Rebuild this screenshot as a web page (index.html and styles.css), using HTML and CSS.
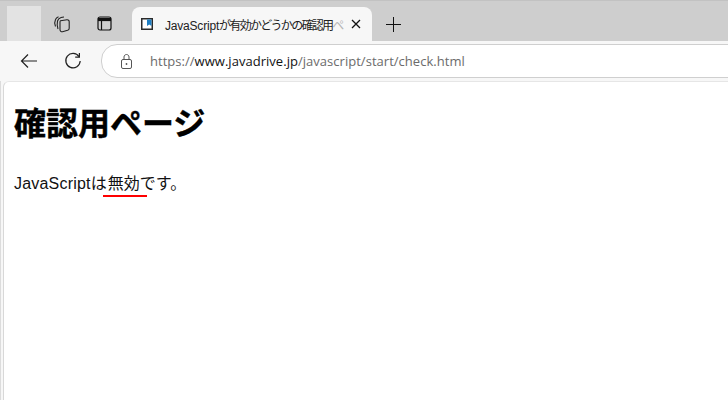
FILE: index.html
```html
<!DOCTYPE html>
<html lang="ja">
<head>
    <meta charset="UTF-8">
    <title>確認用ページ</title>
    <link rel="stylesheet" href="styles.css">
</head>
<body>
    <div class="tabbar">
        <div class="profile"></div>
        <div class="tool-btn">
            <svg width="18" height="18" viewBox="0 0 18 18" fill="none" stroke="#222" stroke-width="1.1">
                <path d="M2.5 11.5C1.5 9 1.5 6.5 2.5 4.5C3 3.2 4 2.2 5.5 1.7"/>
                <path d="M5 14C4.2 12 4 8.5 4.5 6C5 4.2 6 3.2 8 2.5C9 2.1 10 2 11 2"/>
                <path d="M7.5 5.8L14 4.8C15.2 4.7 16.2 5.5 16.2 6.7V13.2C16.2 14.3 15.6 15 14.6 15.3L9.5 16.7C8.2 17 7 16 7 14.8V7C7 6.4 7.1 6 7.5 5.8Z"/>
            </svg>
        </div>
        <div class="tool-btn">
            <svg width="15" height="15" viewBox="0 0 15 15" fill="none" stroke="#111" stroke-width="1.2">
                <rect x="1" y="1" width="13" height="13" rx="2"/>
                <path d="M1 3.5H14" stroke-width="3.2"/>
                <path d="M4.5 5V14"/>
            </svg>
        </div>
        <div class="tab">
            <svg class="favicon" width="12" height="12" viewBox="0 0 12 12">
                <rect x="0.75" y="0.75" width="10.5" height="10.5" fill="#fff" stroke="#2b2b2b" stroke-width="1.5"/>
                <path d="M6 1.5H10.5V8L8.2 6.6L6 8Z" fill="#1f7fc4"/>
            </svg>
            <span class="tab-title">JavaScript<span class="tab-title-ja">が有効かどうかの確認用<span class="tab-fade">ペ</span></span></span>
            <svg class="tab-close" width="10" height="10" viewBox="0 0 10 10" stroke="#111" stroke-width="1.3">
                <path d="M1 1L9 9M9 1L1 9"/>
            </svg>
        </div>
        <div class="new-tab">
            <svg width="15" height="15" viewBox="0 0 15 15" stroke="#111" stroke-width="1">
                <path d="M7.5 0V15M0 7.5H15"/>
            </svg>
        </div>
    </div>

    <div class="toolbar">
        <div class="nav-btn">
            <svg width="18" height="16" viewBox="0 0 18 16" fill="none" stroke="#222" stroke-width="1.2">
                <path d="M1.5 8H17M8 1.5L1.5 8L8 14.5"/>
            </svg>
        </div>
        <div class="nav-btn">
            <svg width="18" height="18" viewBox="0 0 18 18" fill="none" stroke="#222" stroke-width="1.2">
                <path d="M15 4.6A7.2 7.2 0 1 0 16.2 9"/>
                <path d="M15.4 1V5.2H11.2"/>
            </svg>
        </div>
        <div class="address">
            <svg class="lock" width="11" height="15" viewBox="0 0 11 15" fill="none" stroke="#555" stroke-width="1">
                <rect x="0.5" y="5.5" width="10" height="9" rx="1.5"/>
                <path d="M3 5.5V3C3 1.6 4.1 0.5 5.5 0.5C6.9 0.5 8 1.6 8 3V5.5"/>
                <circle cx="5.5" cy="10" r="0.9" fill="#555" stroke="none"/>
            </svg>
            <span class="url">https://<span class="url-host">www.javadrive.jp</span>/javascript/start/check.html</span>
        </div>
    </div>

    <div class="content">
        <div class="viewport">
            <h1>確認用ページ</h1>
            <p><span class="latin">JavaScript</span>は<span class="mark">無効</span>です。</p>
        </div>
    </div>
</body>
</html>
```

FILE: styles.css
```css
html, body {
    height: 100%;
}
body {
    margin: 0;
    overflow: hidden;
    background-color: #f7f7f7;
    font-family: "Liberation Sans", "Noto Sans CJK JP", sans-serif;
    color: #000;
    display: flex;
    flex-direction: column;
}
.tabbar {
    height: 40px;
    flex: none;
    display: flex;
    align-items: flex-end;
    background-color: #cecece;
    border-top: 1px solid #c2c2c2;
}
.profile {
    width: 34px;
    height: 35px;
    margin-left: 7px;
    background-color: #e3e3e3;
}
.tool-btn {
    width: 42px;
    height: 35px;
    display: flex;
    align-items: center;
    justify-content: center;
}
.tab {
    width: 240px;
    height: 34px;
    margin-left: 7px;
    padding: 0 11px 0 9px;
    box-sizing: border-box;
    display: flex;
    align-items: center;
    background-color: #f7f7f7;
    border-radius: 8px 8px 0 0;
}
.favicon {
    flex: none;
}
.tab-title {
    flex: 1;
    margin-left: 12px;
    font-size: 12px;
    color: #222;
    white-space: nowrap;
    letter-spacing: -0.2px;
}
.tab-title-ja {
    letter-spacing: -1.7px;
}
.tab-fade {
    color: #b5b5b5;
}
.tab-close {
    flex: none;
}
.new-tab {
    width: 42px;
    height: 34px;
    display: flex;
    align-items: center;
    justify-content: center;
}
.toolbar {
    height: 40px;
    flex: none;
    display: flex;
    align-items: center;
    background-color: #f7f7f7;
    padding-left: 7px;
    box-sizing: border-box;
}
.nav-btn {
    width: 44px;
    height: 32px;
    display: flex;
    align-items: center;
    justify-content: center;
}
.address {
    flex: 1;
    height: 32px;
    margin-left: 6px;
    margin-right: -20px;
    display: flex;
    align-items: center;
    background-color: #fff;
    border: 1px solid #cfcfcf;
    border-radius: 16px 0 0 16px;
    padding-left: 19px;
}
.url {
    margin-left: 18px;
    font-size: 13px;
    letter-spacing: 0.03px;
    color: #6b6b6b;
    font-family: "Open Sans", "Liberation Sans", sans-serif;
}
.url-host {
    color: #111;
}
.content {
    flex: 1;
    display: flex;
    padding-left: 2px;
    border-left: 1px solid #dcdcdc;
}
.viewport {
    flex: 1;
    padding: 1px 10px;
    background-color: #fff;
    border-top: 1px solid #e6e6e6;
    border-left: 1px solid #d8d8d8;
    border-radius: 6px 0 0 0;
}
h1 {
    margin: 21px 0 0;
    font-size: 32px;
    line-height: 40px;
    font-weight: bold;
    -webkit-text-stroke: 0.4px #000;
}
p {
    margin: 28px 0 0;
    font-size: 16px;
    line-height: 24px;
    color: #111;
}
.latin {
    letter-spacing: 0.2px;
}
.mark {
    position: relative;
    margin-left: 1px;
}
.mark::after {
    content: "";
    position: absolute;
    left: -5px;
    right: -7px;
    bottom: -5px;
    height: 2px;
    background-color: #f00;
}
```
